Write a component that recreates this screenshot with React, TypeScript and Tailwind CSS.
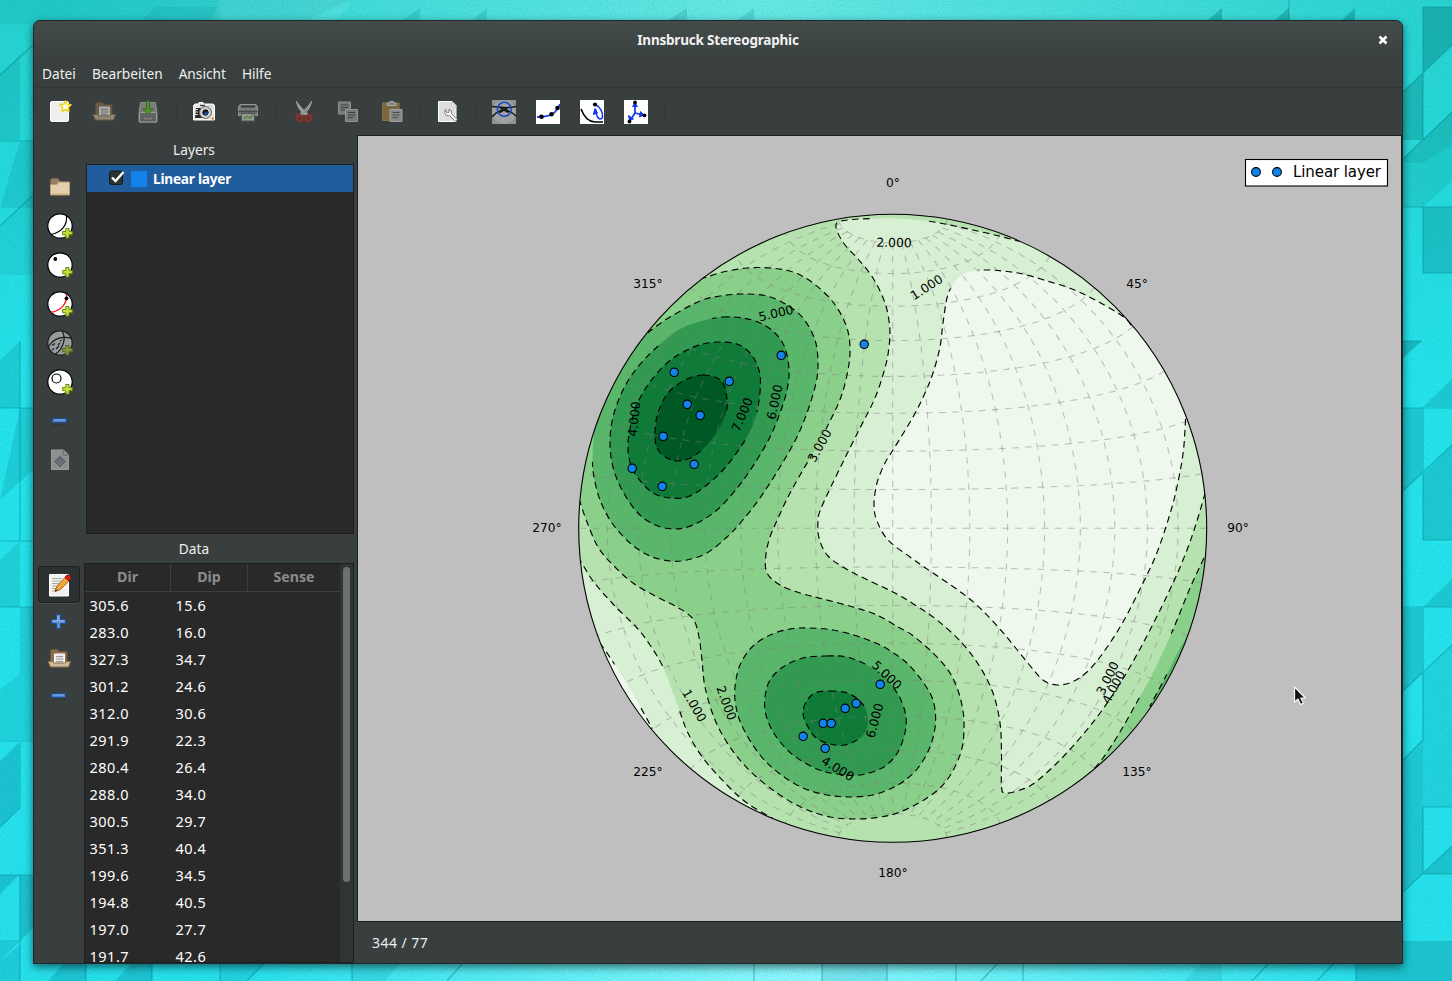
import React from "react";

type Pt = [number, number];

const CX = 892.7;
const CY = 528.3;
const R = 314;

/* ---------- geometry helpers ---------- */

function spline(pts: Pt[], closed: boolean): string {
  const n = pts.length;
  const at = (i: number): Pt => (closed ? pts[(i + n) % n] : pts[Math.max(0, Math.min(n - 1, i))]);
  let d = `M${pts[0][0]} ${pts[0][1]}`;
  const last = closed ? n : n - 1;
  for (let i = 0; i < last; i++) {
    const p0 = at(i - 1);
    const p1 = at(i);
    const p2 = at(i + 1);
    const p3 = at(i + 2);
    d += `C${(p1[0] + (p2[0] - p0[0]) / 6).toFixed(2)} ${(p1[1] + (p2[1] - p0[1]) / 6).toFixed(2)} ${(p2[0] - (p3[0] - p1[0]) / 6).toFixed(2)} ${(p2[1] - (p3[1] - p1[1]) / 6).toFixed(2)} ${p2[0]} ${p2[1]}`;
  }
  return closed ? d + "Z" : d;
}

/* Lambert equal-area projection of the cone angle a around north and rotation t */
function project(a: number, t: number): Pt {
  const n = Math.cos(a);
  const e = Math.sin(a) * Math.cos(t);
  const down = Math.sin(a) * Math.sin(t);
  const k = R * Math.sqrt(1 / (1 + down));
  return [CX + k * e, CY - k * n];
}

const rad = (deg: number) => (deg * Math.PI) / 180;

function polyline(pts: Pt[]): string {
  return "M" + pts.map((p) => `${p[0].toFixed(2)} ${p[1].toFixed(2)}`).join("L");
}

const gridPaths: string[] = [];
for (let a = 10; a <= 170; a += 10) {
  const pts: Pt[] = [];
  for (let t = 0; t <= 180; t += 3) pts.push(project(rad(a), rad(t)));
  gridPaths.push(polyline(pts));
}
for (let t = 10; t <= 170; t += 10) {
  const pts: Pt[] = [];
  for (let a = 10; a <= 170; a += 2) pts.push(project(rad(a), rad(t)));
  gridPaths.push(polyline(pts));
}

/* ---------- contour data ---------- */

interface Contour {
  fill: string;
  segs: { pts: Pt[]; out?: Pt[] }[];
  gaps?: [number, number, number][];
}

const contours: Contour[] = [
  {
    fill: "#d7efd2",
    segs: [
      {
        pts: [[1204.7, 493], [1204, 497], [1196.3, 523], [1187, 550], [1173, 583], [1150, 630], [1127, 672], [1103, 709], [1080, 738], [1057, 763], [1033, 784], [1017, 791], [1005, 793], [1001.5, 787], [1001.5, 753], [1000, 723], [993, 693], [980, 667], [962, 643], [937, 620], [915, 605], [895, 593], [872, 582], [848, 570], [828, 556], [819, 538], [818, 520], [820, 511], [827, 495], [843, 462], [860, 428], [875, 398], [885, 368], [889, 347], [889.7, 327], [885, 303], [873, 278], [858, 259], [845, 245], [836.7, 230], [838, 222], [853, 219.5], [873, 218.5], [900, 218.5], [927, 221], [950, 225], [973, 230], [997, 235.5], [1020, 241.5]],
        out: [[1260, 180], [1300, 490]],
      },
    ],
    gaps: [[900, 218, 26]],
  },
  {
    fill: "#eef8ec",
    segs: [
      {
        pts: [[1186, 408], [1185.5, 420], [1183.5, 450], [1179, 477], [1172, 507], [1158, 550], [1143, 583], [1123, 622], [1103, 653], [1087, 672], [1072, 682], [1057, 685], [1043, 680], [1027, 662], [1005, 635], [982, 610], [962, 593], [930, 571], [910, 557], [888, 540], [877, 521], [874, 505], [877, 483], [885, 463], [893, 450], [913, 417], [925, 393], [933, 373], [940, 347], [943, 323], [947, 298], [952, 286], [960, 276], [972, 271], [987, 270], [1003, 271], [1023, 274], [1047, 281], [1072, 289], [1097, 301], [1123, 316.5], [1131, 325]],
        out: [[1200, 300], [1260, 400]],
      },
    ],
    gaps: [[963, 277, 17]],
  },
  {
    fill: "#d7efd2",
    segs: [
      {
        pts: [[578, 557], [583, 565], [593, 581], [613, 604], [637, 628], [650, 645], [662, 665], [672, 690], [680, 712], [688, 733], [703, 758], [727, 785], [747, 803], [772, 818]],
        out: [[760, 900], [500, 900], [500, 557]],
      },
    ],
    gaps: [[671, 689, 23]],
  },
  {
    fill: "#eef8ec",
    segs: [
      { pts: [[600, 643], [613, 662], [633, 694], [652, 728]], out: [[600, 760], [560, 640]] },
    ],
    gaps: [[627, 685, 24]],
  },
  {
    fill: "#8bd08a",
    segs: [
      {
        pts: [[700, 279], [707, 277], [723, 272], [747, 268], [770, 268], [793, 272], [813, 283], [833, 302], [846, 325], [850, 347], [848, 370], [841, 397], [830, 421], [816, 448], [803, 470], [788, 497], [775, 525], [769, 540], [765.7, 557], [767, 573], [780, 585], [800, 593], [823, 599], [853, 607], [877, 615], [898, 627], [912, 635], [933, 653], [950, 673], [960, 697], [964, 723], [961, 752], [947, 780], [927, 798], [900, 812], [880, 817], [857, 819], [830, 817], [803, 808], [777, 793], [750, 771], [730, 747], [715, 720], [705, 687], [702, 660], [699, 637], [693, 619], [677, 607], [657, 597], [633, 583], [613, 565], [598, 547], [587, 522], [580, 502], [578, 495]],
        out: [[500, 495], [500, 279]],
      },
      {
        pts: [[1208, 548], [1203, 560], [1190, 588], [1172, 632], [1152, 675], [1137, 702], [1120, 732], [1103, 758], [1090, 773], [1080, 781]],
        out: [[1080, 880], [1300, 880], [1300, 548]],
      },
    ],
    gaps: [[820, 443, 15], [1156, 664, 34]],
  },
  {
    fill: "#5ab66b",
    segs: [
      {
        pts: [[634, 350], [640, 341], [650, 331], [670, 317], [700, 301], [720, 296], [743, 294], [767, 296], [787, 305], [803, 318], [815, 340], [818, 363], [816, 383], [808, 410], [797, 437], [780, 467], [760, 498], [742, 521], [727, 537], [707, 553], [687, 560], [670, 561], [650, 556], [630, 543], [612, 523], [600, 500], [594, 477], [592.5, 460], [594, 435], [598, 415]],
        out: [[540, 415], [540, 350]],
      },
      {
        pts: [[810, 628], [833, 630], [857, 636], [880, 645], [898, 656], [909, 665], [923, 682], [933, 700], [935.5, 723], [930, 747], [918, 768], [904, 781], [892, 788], [873, 795], [850, 797], [827, 795], [803, 788], [780, 774], [760, 755], [743, 728], [736, 707], [735, 687], [740, 665], [752, 647], [770, 635], [790, 629]],
      },
      { pts: [[1188, 635], [1178, 652], [1166, 676], [1150, 706]], out: [[1200, 720]] },
    ],
    gaps: [[594, 439, 23], [1180, 652, 26]],
  },
  {
    fill: "#329950",
    segs: [
      {
        pts: [[723, 317], [743, 318], [760, 323], [775, 333], [785, 348], [789, 370], [787, 390], [780, 413], [770, 437], [755, 463], [738, 487], [717, 510], [693, 525], [673, 529], [653, 524], [637, 512], [622, 490], [613, 467], [610, 443], [613, 417], [623, 390], [637, 368], [657, 347], [680, 329], [702, 321]],
      },
      {
        pts: [[827, 656], [847, 657], [867, 665], [885, 677], [893, 687], [901, 700], [906, 717], [905, 733], [899, 750], [891, 761], [880, 769], [860, 775], [837, 774], [817, 769], [793, 755], [775, 735], [766, 715], [765, 697], [770, 680], [783, 667], [803, 658]],
      },
    ],
    gaps: [[684, 330, 30], [882, 676, 17]],
  },
  {
    fill: "#107a38",
    segs: [
      {
        pts: [[703, 344], [720, 342], [737, 344], [750, 353], [758, 367], [760.5, 383], [758, 407], [752, 427], [740, 448], [723, 470], [703, 488], [687, 497], [670, 498], [653, 493], [638, 478], [630, 462], [628, 443], [632, 420], [638, 402], [650, 382], [667, 363], [685, 351]],
      },
      {
        pts: [[830, 691], [847, 693], [860, 701], [867, 713], [867, 728], [860, 738], [845, 745], [830, 744], [815, 737], [806, 723], [803, 713], [806, 702], [815, 693]],
      },
    ],
    gaps: [[866, 724, 18], [754, 426, 14]],
  },
  {
    fill: "#005824",
    segs: [
      {
        pts: [[703, 375], [717, 378], [724, 385], [727, 400], [726, 413], [718, 430], [707, 445], [692, 457], [678, 461], [667, 458], [657, 448], [655, 432], [658, 413], [668, 393], [685, 380]],
      },
    ],
    gaps: [[716, 435, 22]],
  },
];

function segPath(s: { pts: Pt[]; out?: Pt[] }): string {
  if (!s.out) return spline(s.pts, true);
  return spline(s.pts, false) + s.out.map((p) => `L${p[0]} ${p[1]}`).join("") + "Z";
}

const poles: Pt[] = [
  [864, 344], [781, 355], [674, 372], [729, 381], [687, 404], [700, 415], [663, 436], [694, 464], [632, 468], [662, 486],
  [880, 684], [856, 703], [845, 708], [823, 723], [831, 723], [803, 736], [825, 748],
];

const inlineLabels: [string, number, number, number][] = [
  ["2.000", 894, 242.5, 1],
  ["1.000", 926.5, 287, -33],
  ["5.000", 776, 313, -13],
  ["4.000", 634, 419, -84],
  ["7.000", 742, 414.5, -67],
  ["6.000", 774.5, 402, -78],
  ["3.000", 819.5, 445.5, -61],
  ["1.000", 694.5, 705.5, 60],
  ["2.000", 726.5, 703, 70],
  ["5.000", 887, 675, 44],
  ["6.000", 874.5, 720.5, -75],
  ["4.000", 838, 768.5, 32],
  ["3.000", 1107.5, 678, -64],
  ["4.000", 1113.5, 687, -62],
];

const azimuths: [string, number, number][] = [
  ["0°", 893, 183],
  ["45°", 1137, 284],
  ["90°", 1238, 528],
  ["135°", 1137, 772],
  ["180°", 893, 873],
  ["225°", 648, 772],
  ["270°", 547, 528],
  ["315°", 648, 284],
];

function Stereonet() {
  return (
    <svg width="1043" height="785" viewBox="358 136 1043 785" className="block" fontFamily="'DejaVu Sans', sans-serif">
      <defs>
        <clipPath id="net">
          <circle cx={CX} cy={CY} r={R} />
        </clipPath>
        {contours.map((c, i) => (
          <mask key={i} id={`gap${i}`} maskUnits="userSpaceOnUse" x="358" y="136" width="1043" height="785">
            <rect x="358" y="136" width="1043" height="785" fill="white" />
            {(c.gaps ?? []).map((g, j) => (
              <circle key={j} cx={g[0]} cy={g[1]} r={g[2]} fill="black" />
            ))}
          </mask>
        ))}
      </defs>
      <g clipPath="url(#net)">
        <circle cx={CX} cy={CY} r={R} fill="#b6e2af" />
        {contours.map((c, i) => (
          <path key={i} d={c.segs.map(segPath).join("")} fill={c.fill} />
        ))}
        <g fill="none" stroke="#808080" strokeOpacity="0.47" strokeWidth="1.050" strokeDasharray="6.6 6.6">
          {gridPaths.map((d, i) => (
            <path key={i} d={d} />
          ))}
        </g>
        {contours.map((c, i) => (
          <g key={i} mask={`url(#gap${i})`} fill="none" stroke="#000" strokeWidth="1.15" strokeDasharray="6.6 4.4">
            {c.segs.map((s, j) => (
              <path key={j} d={segPath(s)} />
            ))}
          </g>
        ))}
      </g>
      <circle cx={CX} cy={CY} r={R} fill="none" stroke="#000" strokeWidth="1.1" />
      {inlineLabels.map(([t, x, y, a], i) => (
        <text key={i} x={x} y={y} fontSize="12.4" textAnchor="middle" dominantBaseline="central" transform={`rotate(${a} ${x} ${y})`}>
          {t}
        </text>
      ))}
      {azimuths.map(([t, x, y]) => (
        <text key={t} x={x} y={y} fontSize="12.2" textAnchor="middle" dominantBaseline="central">
          {t}
        </text>
      ))}
      {poles.map(([x, y], i) => (
        <circle key={i} cx={x + 0.2} cy={y + 0.3} r="4.2" fill="#1283eb" stroke="#000" strokeWidth="1.1" />
      ))}
      <rect x="1245.5" y="159.5" width="142" height="26.5" fill="#fff" stroke="#000" strokeWidth="1.1" />
      <circle cx="1256" cy="172" r="4.4" fill="#1283eb" stroke="#000" strokeWidth="1.1" />
      <circle cx="1277" cy="172" r="4.4" fill="#1283eb" stroke="#000" strokeWidth="1.1" />
      <text x="1293" y="177" fontSize="15" textLength="88" lengthAdjust="spacing">
        Linear layer
      </text>
      <path d="M1294.6 687v15.2l3.4-3.2 2.6 5.6 2.8-1.3-2.6-5.3h4.6z" fill="#111" stroke="#fff" strokeWidth="1.1" strokeLinejoin="round" />
    </svg>
  );
}

/* ---------- icons ---------- */

function Icon({ children, dim = false, size = 24 }: { children: React.ReactNode; dim?: boolean; size?: number }) {
  return (
    <svg width={size} height={size} viewBox="0 0 24 24" className={dim ? "block opacity-60" : "block"} fill="none">
      {children}
    </svg>
  );
}

const NewIcon = () => (
  <Icon>
    <path d="M2.5 3h18.5v19.500h-18.500z" fill="#1d2121" opacity=".5" />
    <rect x="2.500" y="1.500" width="18" height="20" rx="1.5" fill="#eeeeec" stroke="#fff" />
    <path d="M17.500 1l1.8 3.3 3.7.5-2.6 2.8.5 3.7-3.4-1.5-3.4 1.5.5-3.7-2.6-2.8 3.7-.5z" fill="#fffbe0" stroke="#ecd51a" strokeWidth="1.5" strokeLinejoin="round" />
  </Icon>
);

const OpenIcon = ({ dim = true }: { dim?: boolean }) => (
  <Icon dim={dim}>
    <path d="M3.5 17V4l1-1.500h6l1.5 2h7.5l.5 1V17z" fill="#8a6f4c" stroke="#6f5636" />
    <path d="M7.5 7h10V17h-10z" fill="#e8e8e6" stroke="#fff" />
    <path d="M9 9.500h7M9 12h7M9 14.500h7" stroke="#999" />
    <path d="M1 14.500h4.500l1.500 1.500h11l1.500-1.500h4L21.500 20h-18z" fill="#cdb899" stroke="#8a6d48" strokeLinejoin="round" />
  </Icon>
);

const SaveIcon = () => (
  <Icon dim>
    <path d="M4.500 2.500h15l1.500 11v8.500H3v-8.500z" fill="#a4a6a2" stroke="#c6c8c4" strokeLinejoin="round" />
    <rect x="3.500" y="12.500" width="17" height="9.500" rx="1" fill="#7d807b" stroke="#d6d8d4" />
    <path d="M7 17h10v3H7z" fill="#a8aaa6" stroke="#555" strokeWidth=".7" />
    <path d="M10.500 1h3v8H17.500L12 14.500 6.500 9h4z" fill="#6fc52a" stroke="#3f8a0a" />
  </Icon>
);

const CameraIcon = () => (
  <Icon>
    <path d="M2 5l1-1h3l1-1.500h4l1 1.500h9l1.500 1.500v14.500h-21V6z" fill="#e8e8e6" stroke="#fff" />
    <path d="M4 8h7v10H3z" fill="#222a2a" />
    <path d="M3 9.500h3M3 12h3M3 14.500h3M16 5.500h4v3h-4z" stroke="#d0d2ce" />
    <circle cx="13.500" cy="12.500" r="6" fill="#c9cbc7" stroke="#666" />
    <circle cx="13.500" cy="12.500" r="3.700" fill="#17191c" stroke="#fff" strokeWidth=".8" />
    <circle cx="14" cy="13.500" r="1.700" fill="#1e4f9a" />
    <path d="M8 5.500h5" stroke="#444" strokeWidth="1.500" />
    <circle cx="20.700" cy="18.500" r="1.200" fill="#e8830c" />
  </Icon>
);

const PrinterIcon = () => (
  <Icon dim>
    <path d="M4 4.500h16l1.500 2.500V15.500H2.500V7z" fill="#a2a4a0" stroke="#cfd1cd" strokeLinejoin="round" />
    <path d="M5 6.500h14" stroke="#333" strokeWidth="2" />
    <path d="M2.500 10.500h19v2h-19z" fill="#555" />
    <path d="M5.500 13.500h13v7.500h-13z" fill="#d0d2ce" stroke="#666" />
    <path d="M8 18.500l3-2 3 1.500 3-3" stroke="#76b04a" strokeWidth="1.800" />
    <path d="M17 8.500h2" stroke="#7fd34a" />
  </Icon>
);

const CutIcon = () => (
  <Icon dim>
    <path d="M4.500 1.500C6 8 9 12 14.500 16l1.500-2C10 9 7.500 6 4.500 1.500z" fill="#d9dbd7" stroke="#eee" />
    <path d="M19.500 1.500C18 8 15 12 9.500 16L8 14c6-5 8.500-8 11.500-12.500z" fill="#c4c6c2" stroke="#eee" />
    <circle cx="7.500" cy="18" r="2.900" stroke="#c82020" strokeWidth="2.200" />
    <circle cx="16.500" cy="18" r="2.900" stroke="#c82020" strokeWidth="2.200" />
  </Icon>
);

const CopyIcon = () => (
  <Icon dim>
    <path d="M2.500 2h12v12h-12z" fill="#9da09b" stroke="#c9cbc7" />
    <path d="M5 5h7M5 7.500h7M5 10h5" stroke="#444" />
    <path d="M9.500 9.500h12v12h-12z" fill="#9da09b" stroke="#d0d2ce" />
    <path d="M12 12.500h7M12 15h7M12 17.500h5" stroke="#444" />
  </Icon>
);

const PasteIcon = () => (
  <Icon dim>
    <path d="M2.500 3h16.500v17.500H2.500z" fill="#a9803c" stroke="#c09548" />
    <path d="M7 5.500V3h2l.5-1.500h4l.5 1.500h2v2.500z" fill="#b9bbb7" stroke="#eee" />
    <path d="M10 9.500h12v12h-12z" fill="#b8bab6" stroke="#e4e6e2" />
    <path d="M12.500 12.500h7M12.500 15h7M12.500 17.500h5" stroke="#555" />
  </Icon>
);

const PrefsIcon = () => (
  <Icon>
    <path d="M2.500 1.500h13.500l4 4v16h-17.500z" fill="#dededc" stroke="#fff" strokeLinejoin="round" />
    <path d="M15 2l5 5h-4z" fill="#f8f8f8" stroke="#bbb" strokeWidth=".7" />
    <path d="M10 9.500c-2 1.500-2 5 1 6 1 .3 2 0 2.500 0l6 6 1.800-1.800-5.800-6c.5-2-.5-4.200-2.500-4.700v3.200l-1.500.8-1.500-1z" fill="#fafafa" stroke="#777" strokeWidth="1" />
  </Icon>
);

const CrossSectionIcon = () => (
  <Icon>
    <path d="M0 0h24v24H0z" fill="#8f9393" />
    <circle cx="12" cy="12" r="11.800" fill="#9fa3a3" />
    <path d="M0 6.500q5 .5 12 1t12-1M0 17q5-6 12-7.500 7 1.500 12 6.500M8 7.500l8.500 5M16 7.500l-8.500 5" stroke="#15191a" strokeWidth="1.500" />
    <circle cx="12.300" cy="9.300" r="7" stroke="#1d47bd" strokeWidth="1.600" />
  </Icon>
);

const BestPlaneIcon = () => (
  <Icon>
    <path d="M0 0h24v24H0z" fill="#fff" />
    <path d="M1 17q14 0 18-5 4-5 5-8" stroke="#1238f0" strokeWidth="1.800" />
    <circle cx="5.500" cy="16.800" r="2.300" fill="#000" />
    <circle cx="15.500" cy="14.300" r="2.300" fill="#000" />
    <circle cx="21.500" cy="8" r="2.300" fill="#000" />
  </Icon>
);

const RotateIcon = () => (
  <Icon>
    <path d="M0 0h24v24H0z" fill="#fff" />
    <path d="M1 9q5 13 14 13h8" stroke="#000" strokeWidth="1.600" />
    <path d="M16 5c4 2 7 7 6.500 12-.5 3-3.500 2.500-5 0-1-2-2-5-2-8" stroke="#1238f0" strokeWidth="1.600" />
    <path d="M13.300 14.500L15 8.500l2.500 4.500z" fill="#1238f0" stroke="#1238f0" />
    <circle cx="15" cy="4.500" r="2.100" fill="#000" />
  </Icon>
);

const AxesIcon = () => (
  <Icon>
    <path d="M0 0h24v24H0z" fill="#fff" />
    <path d="M11 13V5M11 13l8 2M11 13l-4.500 7" stroke="#1238f0" strokeWidth="1.700" />
    <path d="M8.500 6.500L11 3l2.500 3.500zM16.500 11.500l3.500 3.500-4.500 2zM4.500 15.500L5.500 20l4-1z" fill="#1238f0" stroke="#1238f0" />
    <circle cx="11" cy="2.500" r="1.900" fill="#000" />
    <circle cx="20.500" cy="15.300" r="1.900" fill="#000" />
    <circle cx="5.500" cy="21.500" r="1.900" fill="#000" />
  </Icon>
);

const FolderIcon = () => (
  <Icon>
    <path d="M2.500 10V5l1.500-1.500h5.500L11.500 5.500v4" fill="#967e60" stroke="#7a6140" />
    <path d="M2.500 9.500h6l2-2.500h11v13h-19z" fill="#e3cfae" stroke="#b89a70" strokeLinejoin="round" />
    <path d="M3.500 19h17" stroke="#c9b08a" />
  </Icon>
);

function NetIcon({ children, dim = false }: { children: React.ReactNode; dim?: boolean }) {
  return (
    <svg width="26" height="26" viewBox="0 0 26 26" fill="none" className={dim ? "block opacity-55" : "block"}>
      <circle cx="13" cy="13" r="12.200" fill={dim ? "#e4e8e8" : "#fff"} stroke="#000" strokeWidth="1.200" />
      {children}
      <path d="M18.800 15.500h3.200v3h3.200v3.200H22v3.200h-3.200v-3.200h-3.200v-3.200h3.200z" fill="#c7e036" stroke="#6a8c10" strokeWidth="1" />
    </svg>
  );
}

const MinusIcon = () => (
  <Icon>
    <path d="M4 15h15v1.500H4z" fill="#252a2a" opacity=".35" />
    <rect x="4.500" y="9.500" width="14" height="4" rx=".5" fill="#4a7fc8" stroke="#1f4c90" />
    <path d="M6 11h11" stroke="#8ab2e6" />
  </Icon>
);

const PlusIcon = () => (
  <Icon>
    <path d="M9.500 4.500h4v5h5v4h-5v5h-4v-5h-5v-4h5z" fill="#5c8ed2" stroke="#1f4c90" />
    <path d="M11 6v5H6M12 11h5" stroke="#9cc0ee" />
  </Icon>
);

const PropertiesIcon = () => (
  <Icon dim>
    <path d="M3.500 2h12l5 5v14.500h-17z" fill="#c4c6c4" stroke="#d8dad8" strokeLinejoin="round" />
    <path d="M15 2.500l.5 4.500 4.500.5" stroke="#888" />
    <path d="M12 8.500l5 5-5 5-5-5z" fill="#a79fb0" stroke="#4b4456" />
    <path d="M9.500 13.500l3-3M11.500 15.500l3-3" stroke="#5d5568" />
  </Icon>
);

const EditIcon = () => (
  <Icon>
    <path d="M2.500 1.500h19v21.500h-19z" fill="#f2f2f0" stroke="#fff" />
    <path d="M5 5.500h10M5 8h9M5 10.500h7M5 13h6M5 15.500h4M5 18h3" stroke="#aaa" />
    <path d="M8 18.500l2-5.500L18.500 4l4 3.500-9 9z" fill="#f2a33a" stroke="#a8620f" strokeWidth=".9" />
    <path d="M18 4.500L20 2l3.500.5.5 3-2 2.500z" fill="#d81e1e" stroke="#8f0f0f" />
    <path d="M8 18.500l.8-2.300 1.600 1.300z" fill="#222" />
  </Icon>
);

/* ---------- wallpaper ---------- */

const shades: { d: string; o: number; c: string }[] = [
  { d: "M0 0H350L300 24H0z", o: 0.1, c: "#007a80" },
  { d: "M154 7L138 24H220V7z", o: 0.12, c: "#007a80" },
  { d: "M220 0H350V7L330 24H210z", o: 0.12, c: "#bff" },
  { d: "M1222 8L1208 20H1222zM1289 8L1275 20H1289zM1355 8L1342 20H1355z", o: 0.4, c: "#007f80" },
  { d: "M420 8L400 22H420zM487 8L470 22H487zM687 8L665 22H687zM754 8L735 22H754z", o: 0.2, c: "#007f80" },
  { d: "M1423 7H1452V45L1423 72z", o: 0.34, c: "#006f6c" },
  { d: "M1403 92L1423 73V140H1403z", o: 0.3, c: "#006f6c" },
  { d: "M1403 159L1452 112V145L1423 163 1403 163z", o: 0.12, c: "#006f6c" },
  { d: "M1403 159L1452 112V181L1423 207H1403z", o: 0.14, c: "#006f6c" },
  { d: "M1423 207H1452V273H1423z", o: 0.26, c: "#006f78" },
  { d: "M1403 341H1422L1403 358z", o: 0.35, c: "#006f78" },
  { d: "M1423 407L1452 379V407zM1403 408H1422V473L1403 491z", o: 0.22, c: "#006f78" },
  { d: "M1423 474L1452 445V540H1423z", o: 0.22, c: "#006f78" },
  { d: "M1423 607L1452 579V607zM1403 608H1422V673L1403 691z", o: 0.22, c: "#006f78" },
  { d: "M1423 674L1452 645V807H1423V740L1403 760V892L1423 874V807z", o: 0.12, c: "#006f78" },
  { d: "M1403 760L1423 741V873L1403 892z", o: 0.1, c: "#006f78" },
  { d: "M1423 874L1452 846V874zM1403 941H1452V981H1356V963H1403z", o: 0.26, c: "#006f78" },
  { d: "M0 75L20 55V140H0zM20 141H33V208H0z", o: 0.16, c: "#006f78" },
  { d: "M0 226L33 195V275H0z", o: 0.1, c: "#006f78" },
  { d: "M0 360L20 341V408H0zM20 408H33V470L0 500z", o: 0.18, c: "#006f78" },
  { d: "M0 560L20 541V607H0zM20 607H33V674H20z", o: 0.16, c: "#006f78" },
  { d: "M20 674H33V740H0V690z", o: 0.14, c: "#006f78" },
  { d: "M0 761L19 743V808L0 827z", o: 0.28, c: "#006f88" },
  { d: "M0 875H19L0 894zM20 875H33V928L20 941z", o: 0.28, c: "#006f88" },
  { d: "M0 942H19L0 961zM0 961L20 945V981H0z", o: 0.18, c: "#006f88" },
  { d: "M86 963V981H48L64 963zM152 963V981H115L132 963z", o: 0.25, c: "#006f88" },
  { d: "M220 963H264L247 981H220zM352 963H400L385 981H352zM822 963H887V981H822zM1222 963H1202L1185 981H1222z", o: 0.12, c: "#006f88" },
];

const creases =
  "M0 741H33M20 743V808L0 827M0 875H33M20 875V981M0 941H20M86 963V981M152 963V981M220 963V981M352 963V981M754 963V981M822 963V981M887 963V981M956 963V981M1023 963V981M1356 963V981M264 963L247 981M463 963L447 981M998 963L981 981M1269 963L1252 981M1334 963L1317 981M0 75L33 45M0 141H33M0 226L33 195M20 341V540M0 408H33M0 541H33M0 607H33M1423 7V140M1423 7H1452M1289 0V20M1403 92L1452 45M1403 159L1452 112M1403 207H1452M1423 207V273H1452M1403 341H1422M1403 408H1452M1423 407V540H1452M1403 491L1452 445M1403 607H1452M1423 607V740L1403 760M1403 691L1452 645M1423 807V874M1423 807H1452M1403 892L1452 846M1423 874H1452";

function Wallpaper() {
  return (
    <svg width="1452" height="981" viewBox="0 0 1452 981" className="absolute inset-0 block">
      <defs>
        <radialGradient id="glowBottom" gradientUnits="userSpaceOnUse" cx="800" cy="1000" r="560">
          <stop offset="0" stopColor="#94fbff" />
          <stop offset="1" stopColor="#94fbff" stopOpacity="0" />
        </radialGradient>
        <radialGradient id="glowTop" gradientUnits="userSpaceOnUse" cx="760" cy="0" r="700">
          <stop offset="0" stopColor="#6aeae6" />
          <stop offset="1" stopColor="#6aeae6" stopOpacity="0" />
        </radialGradient>
        <linearGradient id="base" x1="0" y1="0" x2="0" y2="1">
          <stop offset="0" stopColor="#27d3d0" />
          <stop offset="0.4" stopColor="#26e5ed" />
          <stop offset="1" stopColor="#28e2ee" />
        </linearGradient>
        <filter id="grain" x="0" y="0" width="100%" height="100%">
          <feTurbulence type="fractalNoise" baseFrequency="0.7" numOctaves="2" seed="4" />
          <feColorMatrix values="0 0 0 0 0  0 0 0 0 0.25  0 0 0 0 0.3  0.9 0 0 0 -0.32" />
        </filter>
      </defs>
      <rect width="1452" height="981" fill="url(#base)" />
      <rect width="1452" height="981" fill="url(#glowBottom)" />
      <rect width="1452" height="981" fill="url(#glowTop)" />
      {shades.map((s, i) => (
        <path key={i} d={s.d} fill={s.c} fillOpacity={s.o} />
      ))}
      <path d={creases} fill="none" stroke="#00808a" strokeOpacity="0.45" strokeWidth="1.200" />
      <rect width="1452" height="981" filter="url(#grain)" opacity="0.4" />
    </svg>
  );
}

/* ---------- window ---------- */

const Slot = ({ children }: { children: React.ReactNode }) => (
  <button className="flex h-11 w-11 items-center justify-center">{children}</button>
);

const Sep = () => (
  <div className="flex w-3 justify-center">
    <div className="h-6 w-px bg-[#323838]" />
  </div>
);

const SideSlot = ({ children }: { children: React.ReactNode }) => (
  <button className="flex h-[39px] w-[52px] items-center justify-center">{children}</button>
);

const rows: [string, string][] = [
  ["305.6", "15.6"], ["283.0", "16.0"], ["327.3", "34.7"], ["301.2", "24.6"], ["312.0", "30.6"], ["291.9", "22.3"], ["280.4", "26.4"],
  ["288.0", "34.0"], ["300.5", "29.7"], ["351.3", "40.4"], ["199.6", "34.5"], ["194.8", "40.5"], ["197.0", "27.7"], ["191.7", "42.6"],
];

export default function App() {
  return (
    <div className="relative h-[981px] w-[1452px] overflow-hidden bg-[#22d8e0] pl-[33px] pt-5 font-['Noto_Sans',sans-serif] text-sm text-[#eeeeec]">
      <Wallpaper />
      <div className="relative flex h-[944px] w-[1370px] flex-col overflow-hidden rounded-t-[7px] border border-[#222727] bg-[#393f3f] shadow-[0_3px_9px_rgba(0,0,0,0.55)]">
        <div className="flex h-[67px] shrink-0 flex-col border-b border-[#323737] bg-linear-to-b from-[#434b4b] via-[#3a4040] via-65% to-[#393f3f]">
          <div className="grid h-[39px] grid-cols-[38px_1fr_38px] items-center">
            <span />
            <h1 className="text-center text-[13.5px] font-bold tracking-[-0.2px] text-[#f2f2f2]">Innsbruck Stereographic</h1>
            <svg width="10" height="10" viewBox="0 0 10 10" className="justify-self-center">
              <path d="M1.500 1.500l7 7M8.500 1.500l-7 7" stroke="#fff" strokeWidth="2.600" />
            </svg>
          </div>
          <nav className="flex h-7 items-center gap-4 pl-2 pt-0.5 text-[13.700px]">
            <span>Datei</span>
            <span>Bearbeiten</span>
            <span>Ansicht</span>
            <span>Hilfe</span>
          </nav>
        </div>
        <div className="flex h-[47px] shrink-0 items-center pl-1">
          <Slot><NewIcon /></Slot>
          <Slot><OpenIcon /></Slot>
          <Slot><SaveIcon /></Slot>
          <Sep />
          <Slot><CameraIcon /></Slot>
          <Slot><PrinterIcon /></Slot>
          <Sep />
          <Slot><CutIcon /></Slot>
          <Slot><CopyIcon /></Slot>
          <Slot><PasteIcon /></Slot>
          <Sep />
          <Slot><PrefsIcon /></Slot>
          <Sep />
          <Slot><CrossSectionIcon /></Slot>
          <Slot><BestPlaneIcon /></Slot>
          <Slot><RotateIcon /></Slot>
          <Slot><AxesIcon /></Slot>
          <Sep />
        </div>
        <div className="flex min-h-0 flex-1">
          <aside className="flex w-[323px] shrink-0 flex-col pr-[3px]">
            <h2 className="flex h-[29px] shrink-0 items-center justify-center text-[13.700px]">Layers</h2>
            <div className="flex h-[370px] shrink-0">
              <div className="flex w-[52px] shrink-0 flex-col pt-[3px]">
                <SideSlot><FolderIcon /></SideSlot>
                <SideSlot>
                  <NetIcon><path d="M19.500 3c1 9-5 16.500-15.500 18.500" stroke="#000" strokeWidth="1.200" /></NetIcon>
                </SideSlot>
                <SideSlot>
                  <NetIcon><circle cx="8.300" cy="7" r="1.900" fill="#000" /></NetIcon>
                </SideSlot>
                <SideSlot>
                  <NetIcon>
                    <path d="M19.500 3c1 9-5 16.500-15.500 18.500" stroke="#f01818" strokeWidth="1.300" />
                    <circle cx="19.500" cy="7.300" r="1.900" fill="#000" />
                  </NetIcon>
                </SideSlot>
                <SideSlot>
                  <NetIcon dim>
                    <path d="M15.500 1.500c4 8 0 18-7.500 23M1.500 16.500C6 9 14 6 24.500 8M5 20l2-1.500M5 15.500l3-2M11 15l2-2M13 11l1.500-.8M9 19l3-3" stroke="#000" strokeWidth="1.300" />
                  </NetIcon>
                </SideSlot>
                <SideSlot>
                  <NetIcon><circle cx="9.500" cy="9.500" r="4.500" stroke="#000" strokeWidth="1.200" /></NetIcon>
                </SideSlot>
                <SideSlot><MinusIcon /></SideSlot>
                <SideSlot><PropertiesIcon /></SideSlot>
              </div>
              <div className="flex-1 border border-[#1d2020] bg-[#292929]">
                <div className="flex h-[27px] items-center bg-[#215d9c] pl-[21px]">
                  <svg width="18" height="18" viewBox="0 0 18 18" className="mb-0.5 shrink-0">
                    <rect x="1.500" y="2" width="13" height="13.500" rx="2" fill="#2d3232" stroke="#161a1c" />
                    <path d="M4 8.500l3.500 3.500L15.500 3" fill="none" stroke="#fff" strokeWidth="2.400" />
                  </svg>
                  <span className="ml-[5px] h-4 w-4 bg-[#1283eb]" />
                  <span className="ml-1.5 text-[13.700px] font-bold tracking-[-0.25px] text-white">Linear layer</span>
                </div>
              </div>
            </div>
            <h2 className="flex h-[29px] shrink-0 items-center justify-center text-[13.700px]">Data</h2>
            <div className="flex min-h-0 flex-1">
              <div className="flex w-[50px] shrink-0 flex-col items-center pt-[3px]">
                <button className="flex h-[37px] w-[42px] items-center justify-center rounded-[3px] border border-[#1c2020] bg-[#2b3030] shadow-[0_1px_0_#474e4e]">
                  <EditIcon />
                </button>
                <span className="flex h-[37px] items-center"><PlusIcon /></span>
                <span className="flex h-[37px] items-center"><OpenIcon dim={false} /></span>
                <span className="flex h-[37px] items-center"><MinusIcon /></span>
              </div>
              <div className="flex min-w-0 flex-1 overflow-hidden border border-[#1d2020] bg-[#292929]">
                <div className="flex-1">
                  <div className="grid h-7 grid-cols-[86px_77px_1fr] border-b border-[#3a4040] text-[14.200px] font-bold text-[#8b8c8b]">
                    <span className="flex items-center justify-center border-r border-[#3a4040]">Dir</span>
                    <span className="flex items-center justify-center border-r border-[#3a4040]">Dip</span>
                    <span className="flex items-center justify-center">Sense</span>
                  </div>
                  {rows.map(([dir, dip]) => (
                    <div key={dir} className="grid h-[27px] grid-cols-[86px_77px_1fr] items-center text-[14.500px] tracking-[0.500px] text-white">
                      <span className="pl-[4.500px]">{dir}</span>
                      <span className="pl-[4.500px]">{dip}</span>
                    </div>
                  ))}
                </div>
                <div className="flex w-[13px] shrink-0 bg-[#2f3535] pl-[3px] pt-[3px]">
                  <div className="h-[315px] w-[7px] rounded-full bg-[#6d7070]" />
                </div>
              </div>
            </div>
          </aside>
          <main className="flex min-w-0 flex-1 flex-col">
            <div className="h-[787px] shrink-0 border border-[#1d2020] bg-[#bfbfbf]">
              <Stereonet />
            </div>
            <div className="flex flex-1 items-center pl-[15px] pt-px text-[14px] tracking-[0.450px]">344 / 77</div>
          </main>
        </div>
      </div>
    </div>
  );
}
